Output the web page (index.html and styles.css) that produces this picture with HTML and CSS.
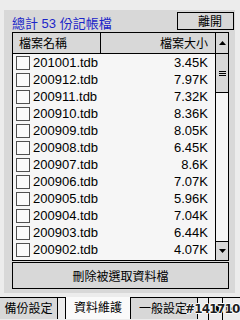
FILE: index.html
```html
<!DOCTYPE html>
<html lang="zh-Hant">
<head>
    <meta charset="UTF-8" />
    <title>資料維護</title>
    <link rel="stylesheet" href="styles.css">
</head>
<body>
    <div class="screen">
        <div class="panel">
            <div class="topbar">
                <span class="total">總計 53 份記帳檔</span>
                <button class="btn close-btn">離開</button>
            </div>

            <div class="list">
                <div class="table">
                    <div class="head">
                        <div class="hcell name">檔案名稱</div>
                        <div class="hcell size">檔案大小</div>
                    </div>
                    <div class="rows">
                        <div class="row"><span class="check"></span><span class="file">201001.tdb</span><span class="kb">3.45K</span></div>
                        <div class="row"><span class="check"></span><span class="file">200912.tdb</span><span class="kb">7.97K</span></div>
                        <div class="row"><span class="check"></span><span class="file">200911.tdb</span><span class="kb">7.32K</span></div>
                        <div class="row"><span class="check"></span><span class="file">200910.tdb</span><span class="kb">8.36K</span></div>
                        <div class="row"><span class="check"></span><span class="file">200909.tdb</span><span class="kb">8.05K</span></div>
                        <div class="row"><span class="check"></span><span class="file">200908.tdb</span><span class="kb">6.45K</span></div>
                        <div class="row"><span class="check"></span><span class="file">200907.tdb</span><span class="kb">8.6K</span></div>
                        <div class="row"><span class="check"></span><span class="file">200906.tdb</span><span class="kb">7.07K</span></div>
                        <div class="row"><span class="check"></span><span class="file">200905.tdb</span><span class="kb">5.96K</span></div>
                        <div class="row"><span class="check"></span><span class="file">200904.tdb</span><span class="kb">7.04K</span></div>
                        <div class="row"><span class="check"></span><span class="file">200903.tdb</span><span class="kb">6.44K</span></div>
                        <div class="row"><span class="check"></span><span class="file">200902.tdb</span><span class="kb">4.07K</span></div>
                    </div>
                </div>
                <div class="scrollbar">
                    <div class="sb-btn up">
                        <svg width="7" height="4" viewBox="0 0 7 4"><path d="M3.5 0 L7 4 L0 4 Z" fill="#000"/></svg>
                    </div>
                    <div class="sb-thumb">
                        <svg width="7" height="5" viewBox="0 0 7 5"><path d="M0 0.5h7M0 2.5h7M0 4.5h7" stroke="#000" stroke-width="1"/></svg>
                    </div>
                    <div class="sb-track"></div>
                    <div class="sb-btn down">
                        <svg width="7" height="4" viewBox="0 0 7 4"><path d="M0 0 L7 0 L3.5 4 Z" fill="#000"/></svg>
                    </div>
                </div>
            </div>

            <button class="btn delete-btn">刪除被選取資料檔</button>
        </div>

        <div class="tabs">
            <div class="tab tab-first">備份設定</div>
            <div class="tab tab-active">資料維護</div>
            <div class="tab tab-third">一般設定</div>
            <div class="arrows">
                <span class="arrow">◀</span>
                <span class="arrow">▶</span>
            </div>
            <span class="stamp">#141710</span>
        </div>
    </div>
</body>
</html>
```

FILE: styles.css
```css
body {
    margin: 0;
    font-family: 'Liberation Sans', 'Noto Sans CJK TC', sans-serif;
    font-size: 13px;
    color: #000;
}

.screen {
    width: 240px;
    height: 320px;
    background: #ececec;
    display: flex;
    flex-direction: column;
    overflow: hidden;
}

.panel {
    margin: 10px 5px 0 4px;
    padding: 2px 6px 0 8px;
    height: 284px;
    box-sizing: border-box;
    background: #d8d8d8;
    display: flex;
    flex-direction: column;
}

.topbar {
    display: flex;
    justify-content: space-between;
    align-items: flex-end;
    height: 18px;
    margin-right: -5px;
    margin-bottom: 2px;
}

.total {
    color: #1c25c8;
    font-size: 13px;
    line-height: 14px;
    margin-bottom: -1px;
}

.btn {
    font-family: 'Noto Sans CJK TC', 'Liberation Sans', sans-serif;
    font-size: 12px;
    background: #d8d8d8;
    border: 1px solid #000;
    border-radius: 0;
    padding: 0;
    color: #000;
}

.close-btn {
    width: 57px;
    height: 18px;
    line-height: 14px;
    text-align: right;
    padding-right: 11px;
}

.list {
    height: 227px;
    border: 1px solid #000;
    display: flex;
    background: #f6f6f6;
}

.table {
    flex: 1;
    overflow: hidden;
}

.head {
    display: flex;
    height: 20px;
    background: #d8d8d8;
    border-bottom: 1px solid #000;
    font-family: 'Noto Sans CJK TC', sans-serif;
    font-size: 12px;
}

.hcell {
    line-height: 20px;
    height: 20px;
}

.hcell.name {
    width: 81px;
    padding-left: 6px;
    border-right: 1px solid #000;
}

.hcell.size {
    flex: 1;
    text-align: right;
    padding-right: 7px;
}

.row {
    display: flex;
    align-items: center;
    height: 17px;
}

.check {
    width: 12px;
    height: 12px;
    border: 1px solid #505050;
    background: #fafafa;
    margin-left: 3px;
    margin-right: 3px;
    flex: none;
}

.file {
    flex: 1;
}

.kb {
    padding-right: 7px;
}

.scrollbar {
    width: 12px;
    border-left: 1px solid #000;
    display: flex;
    flex-direction: column;
}

.sb-btn {
    height: 19px;
    display: flex;
    align-items: center;
    justify-content: center;
    background: #d8d8d8;
}

.sb-btn.up {
    height: 20px;
    border-bottom: 1px solid #000;
}

.sb-btn.down {
    border-top: 1px solid #000;
    height: 18px;
}

.sb-thumb {
    height: 38px;
    background: #d8d8d8;
    border-bottom: 1px solid #000;
    display: flex;
    align-items: center;
    justify-content: center;
}

.sb-track {
    flex: 1;
    background: #f6f6f6;
}

.delete-btn {
    height: 27px;
    margin-top: 1px;
    line-height: 24px;
}

.tabs {
    position: relative;
    display: flex;
    height: 22px;
    margin-top: 4px;
    border-top: 1px solid #000;
    font-family: 'Noto Sans CJK TC', sans-serif;
    font-size: 12px;
}

.tab {
    box-sizing: border-box;
    height: 21px;
    line-height: 20px;
    text-align: center;
    background: #d8d8d8;
    border-right: 1px solid #000;
}

.tab-first {
    width: 58px;
    margin-right: 7px;
}

.tab-active {
    width: 66px;
    background: #fafafa;
    border-left: 1px solid #000;
    margin-top: -1px;
    height: 22px;
}

.tab-third {
    width: 67px;
    text-align: left;
    padding-left: 8px;
}

.arrows {
    display: flex;
    margin-left: 10px;
}

.arrow {
    width: 13px;
    border-left: 1px solid #000;
    font-size: 9px;
    line-height: 21px;
    text-align: center;
    background: #ececec;
}

.stamp {
    position: absolute;
    left: 185px;
    top: 4px;
    font-family: 'DejaVu Sans', sans-serif;
    font-weight: bold;
    font-size: 12px;
    color: #1e1e1e;
    letter-spacing: -0.8px;
    text-shadow: 1px 0 0 #fff, -1px 0 0 #fff, 0 1px 0 #fff, 0 -1px 0 #fff;
}
```
